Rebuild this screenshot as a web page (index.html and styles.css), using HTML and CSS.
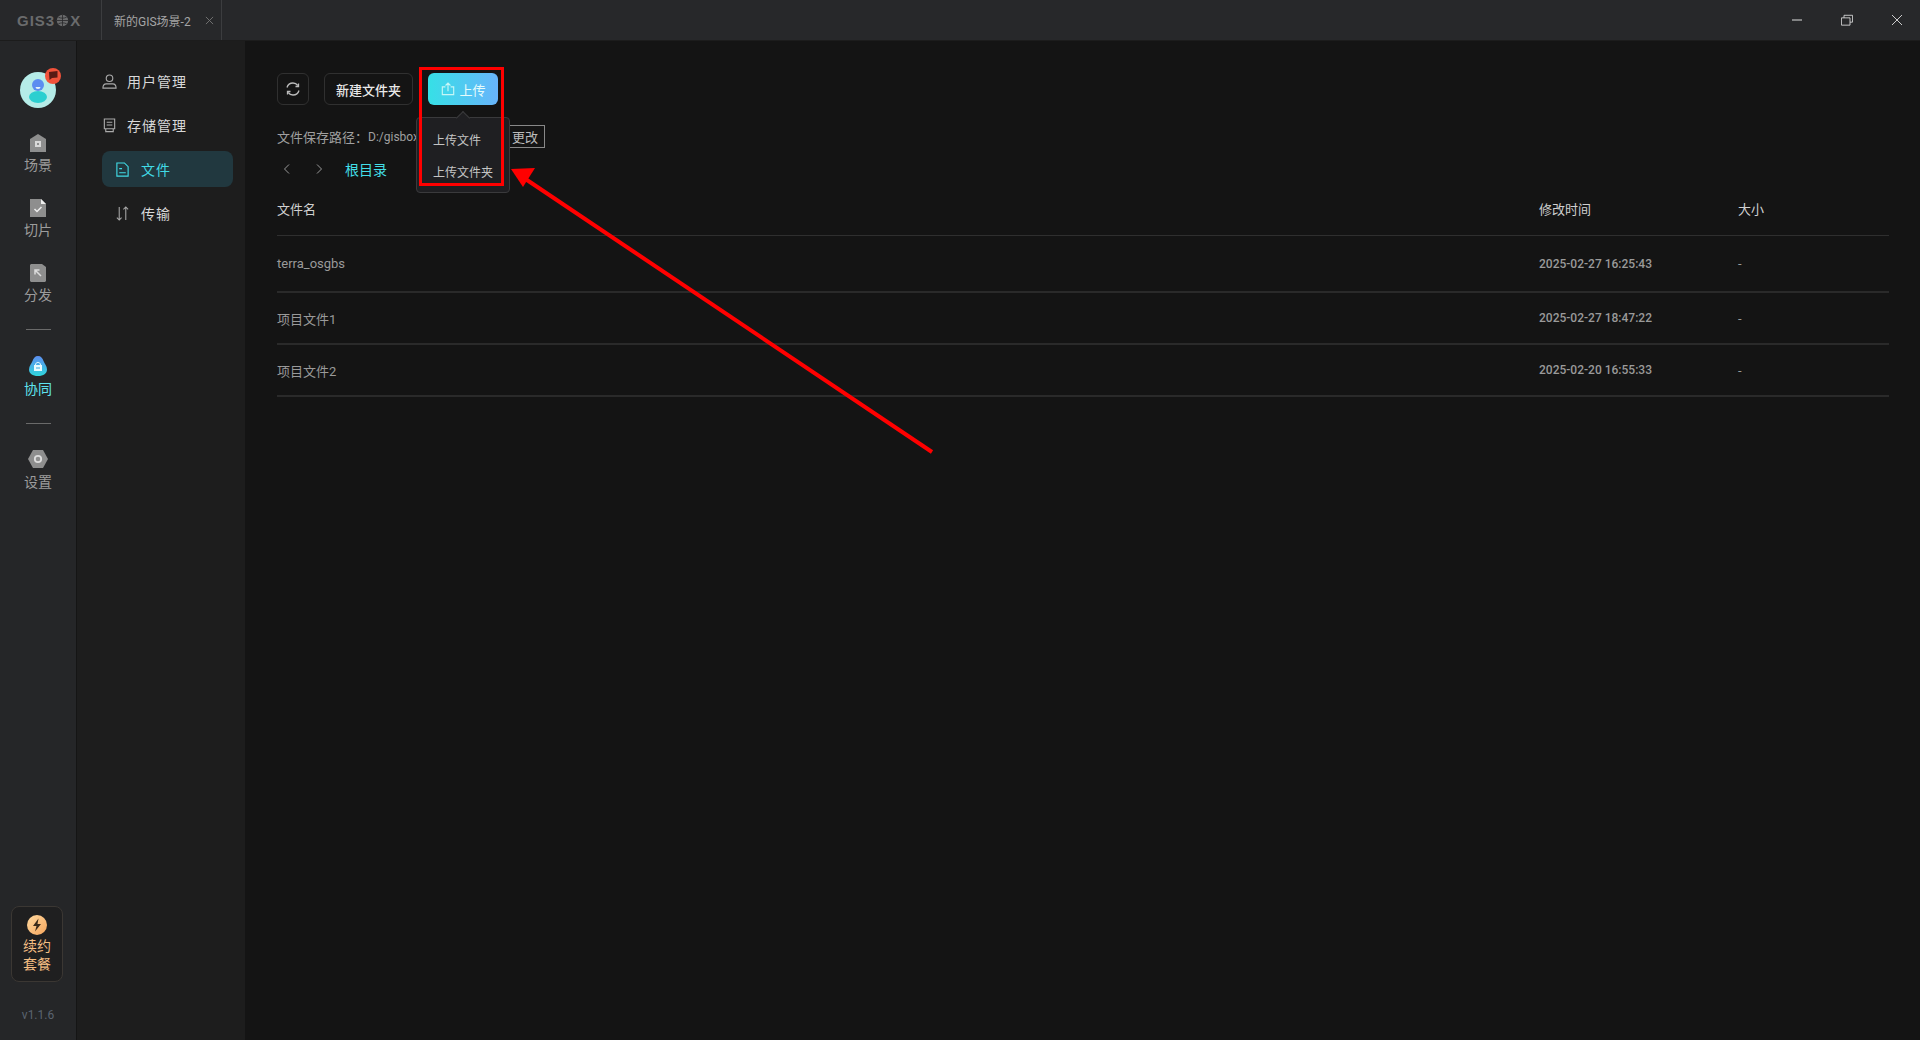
FILE: index.html
```html
<!DOCTYPE html>
<html lang="zh-CN">
<head>
  <meta charset="UTF-8" />
  <meta name="viewport" content="width=device-width, initial-scale=1.0" />
  <title>GISBox</title>
  <link rel="stylesheet" href="styles.css">
</head>
<body>

  <header class="titlebar">
    <div class="logo">GIS3<svg class="logo-globe" viewBox="0 0 16 16"><circle cx="8" cy="8" r="7" fill="#6a6b6c"/><path d="M1 8h14M8 1v14M3 4c3 1.500 7 1.500 10 0M3 12c3-1.500 7-1.500 10 0" stroke="#27282a" stroke-width="1" fill="none"/></svg>X</div>
    <div class="tab">
      <span>新的GIS场景-2</span>
      <svg class="tab-close" viewBox="0 0 10 10"><path d="M1 1l8 8M9 1l-8 8" stroke="#777" fill="none"/></svg>
    </div>
    <div class="win-controls">
      <svg viewBox="0 0 12 12"><path d="M1 6h10" stroke="#ddd" stroke-width="1"/></svg>
      <svg viewBox="0 0 14 14"><path d="M.5 4.500h10v8.500H.500zM3.500 4.500V1.500h10v8h-3" stroke="#ddd" fill="none"/></svg>
      <svg viewBox="0 0 12 12"><path d="M1 1l10 10M11 1L1 11" stroke="#ccc" fill="none"/></svg>
    </div>
  </header>

  <div class="app">
    <!-- left rail -->
    <aside class="rail">
      <div class="avatar">
        <svg viewBox="0 0 36 36" width="36" height="36">
          <circle cx="18" cy="18" r="18" fill="#b5ece8"/>
          <ellipse cx="18" cy="25" rx="9" ry="6" fill="#2ccfd0"/>
          <circle cx="18" cy="13" r="6" fill="#5c8df0"/>
          <path d="M15.500 15h5a2.500 2 0 0 1-5 0z" fill="#e4f4fa"/>
        </svg>
        <span class="avatar-badge"><svg viewBox="0 0 16 16"><circle cx="8" cy="8" r="8" fill="#f2523a"/><path d="M4 4l8.500-1v6.500L7 10l-2.500 2z" fill="#5a1a14"/></svg></span>
      </div>

      <a class="rail-item rail-item-first">
        <svg viewBox="0 0 16 18"><path d="M8 0l8 5v13H0V5z" fill="#8e8e8e"/><path d="M5 7h6v6H5z" fill="#d8d8d8"/><path d="M7 9h2v2H7z" fill="#8e8e8e"/></svg>
        <span>场景</span>
      </a>
      <a class="rail-item">
        <svg viewBox="0 0 16 18"><path d="M0 0h11l5 5v13H0z" fill="#8e8e8e"/><path d="M11 0l5 5h-5z" fill="#eee"/><path d="M4.500 10l2.500 2.500 4.500-4.500" stroke="#eee" stroke-width="1.500" fill="none"/></svg>
        <span>切片</span>
      </a>
      <a class="rail-item">
        <svg viewBox="0 0 16 18"><path d="M1 0h11l4 3v14l-1 1H1l-1-1V1z" fill="#8e8e8e"/><path d="M11 12L5.500 6.500M5 10.500V6h4.500" stroke="#ddd" stroke-width="1.500" fill="none"/></svg>
        <span>分发</span>
      </a>
      <div class="rail-divider"></div>
      <a class="rail-item rail-item-active">
        <svg viewBox="0 0 18 20">
          <defs><linearGradient id="collab" x1="0" y1="0" x2="0" y2="1"><stop offset="0" stop-color="#5d8ef0"/><stop offset="1" stop-color="#2fd6dc"/></linearGradient></defs>
          <path d="M9 0c3 0 4.500 2 5.500 5 1 2.500 3.500 5 3.500 8.500 0 4-3.500 6.500-9 6.500s-9-2.500-9-6.500C0 10 2.500 7.500 3.500 5 4.500 2 6 0 9 0z" fill="url(#collab)"/>
          <path d="M5 9h8v6H5z" fill="#e8fbff"/><path d="M6.500 9c0-3.500 5-3.500 5 0" stroke="#e8fbff" fill="none"/><path d="M7 11.500h4v1H7z" fill="#3aa8e0"/>
        </svg>
        <span>协同</span>
      </a>
      <div class="rail-divider"></div>
      <a class="rail-item">
        <svg viewBox="0 0 20 18"><path d="M5 0h10l5 9-5 9H5L0 9z" fill="#8e8e8e"/><circle cx="10" cy="9" r="3.200" fill="none" stroke="#ddd" stroke-width="1.800"/></svg>
        <span>设置</span>
      </a>

      <div class="rail-bottom">
        <a class="renew">
          <svg viewBox="0 0 20 20"><defs><linearGradient id="bolt" x1="0" y1="0" x2="1" y2="1"><stop offset="0" stop-color="#ffd9a0"/><stop offset="1" stop-color="#f5a55c"/></linearGradient></defs><circle cx="10" cy="10" r="10" fill="url(#bolt)"/><path d="M11.500 3.500L6 11h3.500L8 16.500 14 9h-3.500z" fill="#3a2a1a"/></svg>
          <span>续约</span>
          <span>套餐</span>
        </a>
        <div class="version">v1.1.6</div>
      </div>
    </aside>

    <!-- second level nav -->
    <nav class="subnav">
      <a class="subnav-item">
        <svg viewBox="0 0 16 16"><circle cx="8" cy="4.500" r="3.500" fill="none" stroke="#aaa" stroke-width="1.200"/><path d="M1 15c0-3 1.500-4.500 3.500-4.500h7c2 0 3.500 1.500 3.500 4.500z" fill="none" stroke="#aaa" stroke-width="1.200"/></svg>
        用户管理
      </a>
      <a class="subnav-item">
        <svg viewBox="0 0 16 16"><path d="M2.500 1h11v10.500h-11zM4 14.500h8V11.500H4z" fill="none" stroke="#aaa" stroke-width="1.200"/><path d="M5 4.500h6M5 7.500h6" stroke="#aaa" stroke-width="1.200"/></svg>
        存储管理
      </a>
      <a class="subnav-item subnav-item-active">
        <svg viewBox="0 0 14 16"><path d="M1 1h8l4 4v10H1z" fill="none" stroke="#41dbe6" stroke-width="1.200"/><path d="M3.500 7h3M3.500 11.500h7" stroke="#41dbe6" stroke-width="1.200"/></svg>
        文件
      </a>
      <a class="subnav-item subnav-item-indent">
        <svg viewBox="0 0 14 16"><path d="M3.500 1v14M1 12.500L3.500 15 6 12.500M10.500 15V1M8 3.500L10.500 1 13 3.500" fill="none" stroke="#aaa" stroke-width="1.100"/></svg>
        传输
      </a>
    </nav>

    <main class="content">
      <div class="toolbar">
        <button class="btn btn-icon">
          <svg viewBox="0 0 16 16"><path d="M2 6.500C2.800 3.700 5.200 2 8 2c2 0 3.700 1 4.800 2.500M14 9.500c-.8 2.800-3.200 4.500-6 4.500-2 0-3.700-1-4.800-2.500" fill="none" stroke="#bbb" stroke-width="1.300"/><path d="M13.500 2.500v3h-3M2.500 13.500v-3h3" fill="none" stroke="#bbb" stroke-width="1.300"/></svg>
        </button>
        <button class="btn">新建文件夹</button>
        <div class="upload-wrap">
          <button class="btn btn-primary">
            <svg viewBox="0 0 16 16"><path d="M5 5.500H1.500v9h13v-9H11M8 10.500V1.500M5.200 4L8 1.200 10.800 4" fill="none" stroke="#c6f6f6" stroke-width="1.300"/></svg>
            上传
          </button>
          <div class="upload-menu">
            <div class="upload-menu-item">上传文件</div>
            <div class="upload-menu-item">上传文件夹</div>
          </div>
        </div>
      </div>

      <div class="save-path">
        <span>文件保存路径：</span>
        <span class="save-path-value">D:/gisbox/data</span>
        <button class="change-btn">更改</button>
      </div>

      <div class="crumbs">
        <svg viewBox="0 0 8 12"><path d="M6 1.500L1.500 6 6 10.500" fill="none" stroke="#999"/></svg>
        <svg viewBox="0 0 8 12"><path d="M2 1.500L6.500 6 2 10.500" fill="none" stroke="#999"/></svg>
        <span class="crumb-root">根目录</span>
      </div>

      <div class="file-table">
        <div class="file-row file-head">
          <div>文件名</div><div>修改时间</div><div>大小</div>
        </div>
        <div class="file-row file-row-first">
          <div>terra_osgbs</div><div class="file-date">2025-02-27 16:25:43</div><div>-</div>
        </div>
        <div class="file-row">
          <div>项目文件1</div><div class="file-date">2025-02-27 18:47:22</div><div>-</div>
        </div>
        <div class="file-row">
          <div>项目文件2</div><div class="file-date">2025-02-20 16:55:33</div><div>-</div>
        </div>
      </div>
    </main>
  </div>

  <!-- annotation drawn on top of the screenshot -->
  <svg class="annotation" viewBox="0 0 1920 1040">
    <rect x="420.500" y="68.500" width="82" height="116" fill="none" stroke="#f00" stroke-width="3"/>
    <path d="M932 452L524 178" stroke="#f00" stroke-width="4" fill="none"/>
    <path d="M511 169l24-1-12 19z" fill="#f00"/>
  </svg>

</body>
</html>
```

FILE: styles.css
```css
* {
  margin: 0;
  padding: 0;
  box-sizing: border-box;
}

body {
  width: 1920px;
  height: 1040px;
  overflow: hidden;
  background: #141414;
  color: #ccc;
  font-family: "Roboto", "Noto Sans CJK SC", sans-serif;
  font-size: 13px;
  display: flex;
  flex-direction: column;
  position: relative;
}

/* title bar */
.titlebar {
  height: 41px;
  flex: none;
  display: flex;
  align-items: center;
  background: #27282a;
  border-bottom: 1px solid #1c1c1c;
}

.logo {
  width: 102px;
  display: flex;
  align-items: center;
  padding-left: 17px;
  color: #6a6b6c;
  font-family: "Liberation Sans", sans-serif;
  font-weight: bold;
  font-size: 15px;
  letter-spacing: 1px;
  height: 100%;
  border-right: 1px solid #3c3d3f;
}

.logo-globe {
  width: 13px;
  height: 13px;
  margin: 0 1px;
}

.tab {
  width: 120px;
  height: 100%;
  display: flex;
  align-items: center;
  justify-content: space-between;
  padding: 0 7px 0 12px;
  font-size: 12px;
  color: #a5a5a5;
  border-right: 1px solid #3c3d3f;
}

.tab-close {
  width: 9px;
  height: 9px;
}

.win-controls {
  margin-left: auto;
  display: flex;
  align-items: center;
  gap: 38px;
  padding-right: 17px;
}

.win-controls svg {
  width: 12px;
  height: 12px;
}

.app {
  flex: 1;
  display: flex;
  min-height: 0;
}

/* left rail */
.rail {
  width: 77px;
  flex: none;
  display: flex;
  flex-direction: column;
  align-items: center;
  background: #252628;
  border-right: 1px solid #151515;
  padding-top: 31px;
}

.avatar {
  position: relative;
  width: 36px;
  height: 36px;
  margin-left: -1px;
}

.avatar-badge {
  position: absolute;
  top: -4px;
  right: -5px;
  width: 16px;
  height: 16px;
}

.avatar-badge svg {
  display: block;
}

.rail-item {
  display: flex;
  flex-direction: column;
  align-items: center;
  gap: 3px;
  margin-top: 24px;
  color: #9c9c9c;
  font-size: 14px;
  line-height: 20px;
}

.rail-item svg {
  width: 20px;
  height: 18px;
}

.rail-item-first {
  margin-top: 26px;
}

.rail-item-active {
  color: #5fe2ee;
  margin-top: 25px;
}

.rail-divider {
  width: 25px;
  height: 1px;
  background: #6a6a6a;
  margin-top: 24px;
  margin-bottom: 1px;
}

.rail-divider + .rail-item svg {
  height: 20px;
}

.rail-bottom {
  margin-top: auto;
  display: flex;
  flex-direction: column;
  align-items: center;
}

.renew {
  width: 52px;
  height: 76px;
  border: 1px solid #3b3733;
  border-radius: 8px;
  background: #1f1f20;
  display: flex;
  flex-direction: column;
  align-items: center;
  color: #f4bd83;
  font-size: 14px;
  line-height: 18px;
  padding-top: 8px;
  margin-left: -2px;
}

.renew svg {
  width: 20px;
  height: 20px;
  margin-bottom: 2px;
}

.version {
  color: #5b6470;
  font-size: 12px;
  line-height: 16px;
  margin-top: 25px;
  margin-bottom: 17px;
}

/* second level nav */
.subnav {
  width: 168px;
  flex: none;
  background: #1d1d1d;
  padding: 22px 12px 0 25px;
  display: flex;
  flex-direction: column;
  gap: 8px;
}

.subnav-item {
  height: 36px;
  display: flex;
  align-items: center;
  gap: 10px;
  color: #d8d8d8;
  font-size: 14px;
  letter-spacing: 1px;
  border-radius: 8px;
}

.subnav-item svg {
  width: 15px;
  height: 15px;
  flex: none;
}

.subnav-item-active {
  background: #21383f;
  color: #41dbe6;
  padding-left: 13px;
  gap: 11px;
}

.subnav-item-indent {
  padding-left: 13px;
  gap: 11px;
}

/* main area */
.content {
  flex: 1;
  padding: 32px 31px 0 32px;
  position: relative;
}

.toolbar {
  display: flex;
  gap: 15px;
}

.btn {
  height: 32px;
  padding: 0 11px;
  background: transparent;
  border: 1px solid #303030;
  border-radius: 6px;
  color: #e8e8e8;
  font-family: inherit;
  font-size: 13px;
  font-weight: 500;
  display: flex;
  align-items: center;
  justify-content: center;
  gap: 5px;
}

.btn-icon {
  width: 32px;
  padding: 0;
}

.btn-icon svg {
  width: 16px;
  height: 16px;
}

.btn-primary {
  width: 70px;
  padding: 0;
  border: none;
  background: linear-gradient(90deg, #36e0e6, #68b4fb);
  color: #e6fbfb;
  font-weight: 400;
}

.btn-primary svg {
  width: 14px;
  height: 14px;
}

.upload-wrap {
  position: relative;
}

.upload-menu {
  position: absolute;
  top: 44px;
  left: -12px;
  width: 94px;
  height: 76px;
  background: #1f1f22;
  border: 1px solid #3a3a3c;
  border-radius: 4px;
  padding-top: 7px;
  z-index: 5;
}

.upload-menu::before {
  content: '';
  position: absolute;
  top: -5px;
  left: 41px;
  width: 9px;
  height: 9px;
  background: #1f1f22;
  border-left: 1px solid #3a3a3c;
  border-top: 1px solid #3a3a3c;
  transform: rotate(45deg);
}

.upload-menu-item {
  height: 32px;
  line-height: 32px;
  padding-left: 16px;
  font-size: 12px;
  color: #c4c4c4;
}

.save-path {
  display: flex;
  align-items: center;
  height: 23px;
  margin-top: 20px;
  color: #a0a0a0;
  font-size: 13px;
}

.save-path-value {
  width: 137px;
  font-size: 12px;
  white-space: nowrap;
  overflow: hidden;
}

.change-btn {
  width: 40px;
  height: 23px;
  background: transparent;
  border: 1px solid #888;
  color: #bbb;
  font-family: inherit;
  font-size: 13px;
}

.crumbs {
  display: flex;
  align-items: center;
  height: 22px;
  margin-top: 10px;
  padding-left: 6px;
}

.crumbs svg {
  width: 8px;
  height: 12px;
  margin-right: 24px;
}

.crumbs svg + svg {
  margin-right: 22px;
}

.crumb-root {
  color: #43dfe8;
  font-size: 14px;
}

.file-table {
  margin-top: 12px;
}

.file-row {
  display: grid;
  grid-template-columns: 1262px 199px 1fr;
  align-items: center;
  height: 52px;
  border-bottom: 2px solid #2a2a2a;
  color: #9a9a9a;
  font-size: 13px;
}

.file-head {
  height: 44px;
  align-items: start;
  padding-top: 7px;
  border-bottom: 1px solid #2f2f2f;
  color: #d0d0d0;
}

.file-row-first {
  height: 57px;
}

.file-date {
  font-size: 12px;
  font-weight: 500;
}

/* annotation */
.annotation {
  position: absolute;
  left: 0;
  top: 0;
  width: 1920px;
  height: 1040px;
  pointer-events: none;
  z-index: 10;
}
```
